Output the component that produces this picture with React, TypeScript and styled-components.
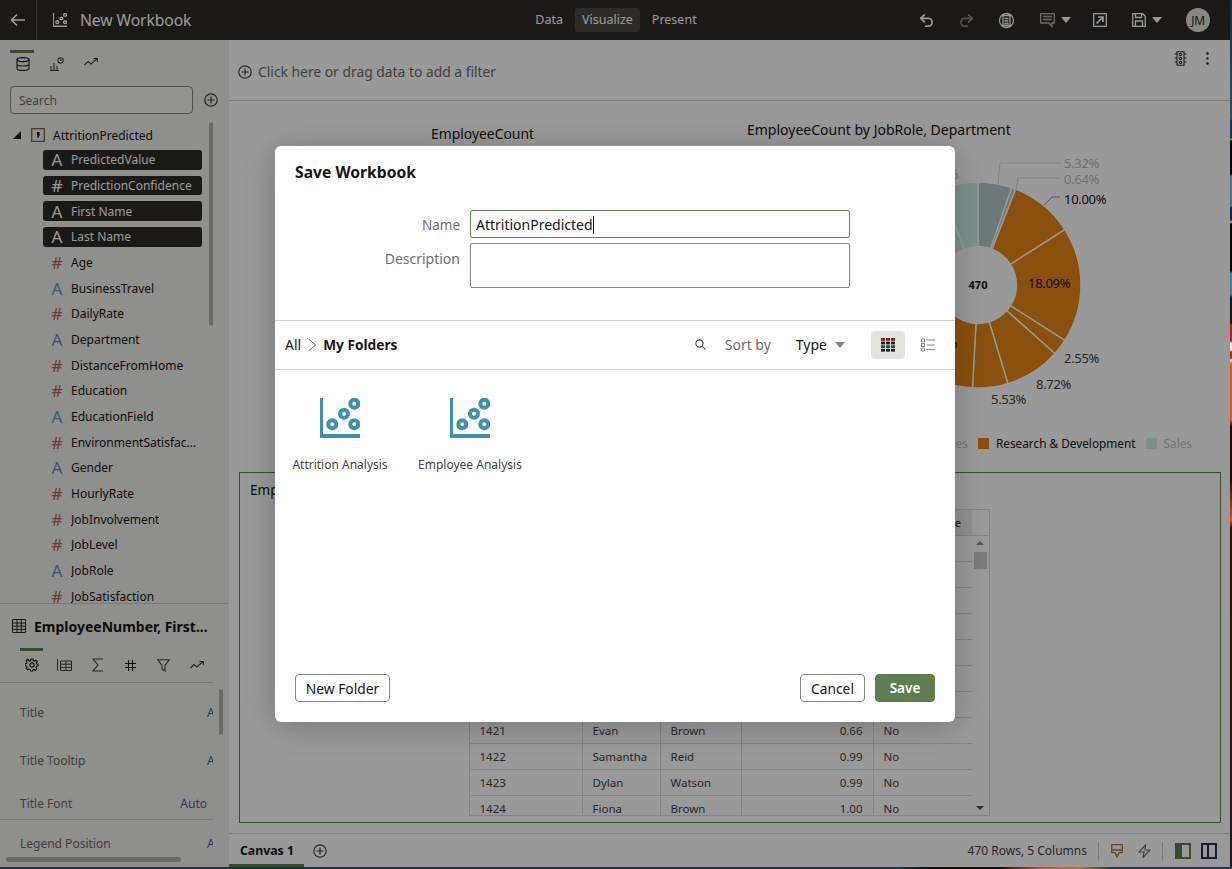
import React from "react";
import styled, { createGlobalStyle } from "styled-components";
import { Undo2, Redo2 } from "lucide-react";

const Global = createGlobalStyle`
  html, body { margin: 0; padding: 0; background: #0a2a3a; }
  body { font-family: "Noto Sans", "Liberation Sans", sans-serif; color: #161513; }
  * { box-sizing: border-box; }
`;

const Root = styled.div`
  width: 1232px; height: 869px; overflow: hidden;
  display: grid; grid-template-columns: 1230px 2px; grid-template-rows: 867px 2px;
`;
const RightStrip = styled.div`
  background: linear-gradient(180deg, #1c2c3a 0, #3a4a50 119px, #0a3a5a 120px, #0a3a5a 138px, #e0a040 139px, #050510 141px, #050510 174px, #5a6a78 176px, #5a6a78 206px, #102050 208px, #102050 220px, #e0c040 222px, #050508 224px, #050508 271px, #4a7a88 273px, #4a7a88 295px, #181820 297px, #181820 323px, #c01818 325px, #c01818 341px, #f0f0f0 343px, #f0f0f0 350px, #c02010 352px, #c02010 358px, #f0f0f0 360px, #e8501a 364px, #e8501a 420px, #200a08 426px, #200a08 480px, #e04a10 520px, #301010 528px, #201820 869px);
`;
const BottomStrip = styled.div`
  grid-column: 1 / span 2;
  background: linear-gradient(90deg, #0a3a4a 0, #0a3a4a 900px, #200a10 930px, #200a10 1000px, #e8401a 1040px, #e8601a 1080px, #104050 1110px, #104050 1232px);
`;
const Win = styled.div`
  position: relative; overflow: hidden; background: #fff;
  display: flex; flex-direction: column;
`;
const Scrim = styled.div`
  position: absolute; inset: 0; background: rgba(0, 0, 0, 0.4);
  padding: 146px 0 0 275px;
`;

/* ---------- header ---------- */
const Header = styled.header`
  height: 40px; flex: none; background: #2c2a28; color: #fff;
  display: grid; grid-template-columns: 1fr auto 1fr; align-items: center;
`;
const HeaderLeft = styled.div`display: flex; align-items: center; height: 100%;`;
const BackBtn = styled.div`
  width: 37px; height: 100%; display: flex; align-items: center; justify-content: center;
  border-right: 1px solid #55524e;
`;
const WorkbookIcon = styled.div`margin-left: 16px; width: 14px; height: 14px; display: flex;`;
const WorkbookTitle = styled.div`margin-left: 13px; font-size: 15.7px; letter-spacing: -0.1px;`;
const Modes = styled.nav`display: flex; align-items: center; gap: 12px; margin-left: 2px;`;
const Mode = styled.div<{ $active?: boolean }>`
  font-size: 12.5px; height: 24px; line-height: 24px; padding: 0 ${(p) => (p.$active ? "7px" : "0")};
  border-radius: 3px; background: ${(p) => (p.$active ? "#4a4845" : "transparent")};
`;
const HeaderRight = styled.div`
  display: flex; align-items: center; justify-content: flex-end; height: 100%; padding-right: 20px;
`;
const HIcon = styled.div<{ $w?: number }>`
  width: ${(p) => p.$w ?? 40}px; height: 100%; display: flex; align-items: center; justify-content: center; gap: 6px;
`;
const Caret = styled.span<{ $c?: string }>`
  width: 0; height: 0; border-left: 5px solid transparent; border-right: 5px solid transparent;
  border-top: 6px solid ${(p) => p.$c ?? "#fff"};
`;
const Avatar = styled.div`
  width: 24px; height: 24px; border-radius: 50%; background: #e4e1dc; color: #2c2a28; margin-left: 8px;
  font-size: 12px; display: flex; align-items: center; justify-content: center; letter-spacing: -0.3px;
`;

/* ---------- body ---------- */
const Body = styled.div`flex: 1; display: flex; min-height: 0;`;
const Side = styled.aside`
  width: 229px; flex: none; background: #efeeec; display: flex; flex-direction: column; position: relative;
`;
const SideTabs = styled.div`display: flex; height: 46px; padding-left: 6px;`;
const SideTab = styled.div<{ $active?: boolean }>`
  width: 34px; padding-top: 10px; display: flex; justify-content: center; position: relative; height: 46px;
  &::before {
    content: ""; display: ${(p) => (p.$active ? "block" : "none")};
    position: absolute; top: 10px; left: 4px; width: 24px; height: 3px; background: #5f7d4f;
  }
  & > svg { margin-top: 7px; }
`;
const SearchRow = styled.div`display: flex; align-items: center; padding-left: 10px; gap: 11px; flex: none;`;
const SearchBox = styled.div`
  width: 183px; height: 28px; border: 1px solid #8c8681; border-radius: 4px; background: #f6f5f3;
  font-size: 12px; color: #6f6b67; padding-left: 8px; line-height: 28px;
`;
const Tree = styled.div`
  height: 481px; margin-top: 8px; flex: none; overflow: hidden; position: relative;
`;
const TreeRoot = styled.div`
  display: flex; align-items: center; height: 25px; padding: 1px 0 0 13px; font-size: 12px; gap: 8px;
`;
const Triangle = styled.span`
  width: 0; height: 0; border-bottom: 8px solid #161513; border-left: 8px solid transparent; margin-right: 2px;
`;
const FieldRow = styled.div<{ $selected?: boolean }>`
  height: 25.68px; margin-left: 43px; width: 159px; display: flex; align-items: center;
  position: relative; font-size: 12px; white-space: nowrap;
  padding: 0 3px 0 28px;
  color: ${(p) => (p.$selected ? "#fff" : "#161513")};
  &::before {
    content: ""; position: absolute; left: 0; right: 0; top: 3px; bottom: 3px; border-radius: 3px;
    background: ${(p) => (p.$selected ? "#2c2a28" : "transparent")};
  }
`;
const FieldGlyph = styled.span<{ $kind: "text" | "num"; $selected?: boolean }>`
  position: absolute; left: 7px; width: 14px; text-align: center; font-size: 17px; line-height: 1;
  color: ${(p) => (p.$selected ? "#fff" : p.$kind === "num" ? "#c0644c" : "#5a9ab5")};
`;
const FieldText = styled.span`position: relative; overflow: hidden; text-overflow: ellipsis;`;
const VScroll = styled.div<{ $top: number; $h: number; $x: number }>`
  position: absolute; left: ${(p) => p.$x}px; top: ${(p) => p.$top}px; height: ${(p) => p.$h}px;
  width: 4px; border-radius: 2px; background: #b5b1ac;
`;
const Props = styled.section`
  flex: 1; border-top: 1px solid #c9c6c2; position: relative; overflow: hidden;
`;
const PropsTitle = styled.div`
  height: 44px; display: flex; align-items: center; padding-left: 12px; gap: 8px;
  font-weight: 700; font-size: 14px; white-space: nowrap;
`;
const PropTabs = styled.div`
  display: flex; width: 213px; height: 35px; border-bottom: 1px solid #c9c6c2; padding-left: 15px;
`;
const PropTab = styled.div<{ $active?: boolean }>`
  width: 33px; display: flex; align-items: center; justify-content: center; position: relative;
  &::before {
    content: ""; display: ${(p) => (p.$active ? "block" : "none")};
    position: absolute; top: 0; left: 5px; width: 23px; height: 3px; background: #5f7d4f;
  }
`;
const PropRow = styled.div<{ $h: number; $line?: boolean; $pt?: number }>`
  width: 213px; height: ${(p) => p.$h}px; display: flex; align-items: center; overflow: hidden; padding-left: 20px;
  padding-top: ${(p) => p.$pt ?? 0}px;
  font-size: 12px; color: #6f6b67;
  border-bottom: ${(p) => (p.$line ? "1px solid #c9c6c2" : "none")};
`;
const PropLabel = styled.span`flex: 1;`;
const PropVal = styled.span<{ $clip?: boolean }>`
  color: #2a6f96; margin-right: ${(p) => (p.$clip ? "-21px" : "6px")}; width: ${(p) => (p.$clip ? "27px" : "auto")};
`;
const HBar = styled.div`
  position: absolute; left: 6px; bottom: 5px; width: 175px; height: 5px; border-radius: 3px; background: #b5b1ac;
`;

/* ---------- canvas ---------- */
const Main = styled.main`flex: 1; display: flex; flex-direction: column; min-width: 0; background: #fff;`;
const FilterBar = styled.div`
  height: 61px; flex: none; border-bottom: 1px solid #d6d3cf; background: #fff;
  display: flex; align-items: center; padding: 0 21px 0 9px; position: relative;
`;
const FilterText = styled.div`
  display: flex; align-items: center; gap: 6px; font-size: 13.85px; color: #6f6b67; margin-top: 3px; flex: 1;
`;
const FilterTools = styled.div`display: flex; align-items: center; gap: 18px; margin-top: -24px;`;
const Charts = styled.div`height: 371px; flex: none; display: flex;`;
const LeftChart = styled.div`width: 505px; text-align: center; font-size: 13.9px; padding: 23px 0 0 2px;`;
const RightChart = styled.div`flex: 1; display: flex; flex-direction: column; font-size: 13px; padding-top: 20px;`;
const ChartTitle = styled.div`margin-left: 13px; height: 21px; line-height: 18px; font-size: 14px; white-space: nowrap;`;
const DonutSvg = styled.svg`display: block; flex: none; font-family: "Noto Sans", sans-serif;`;
const Legend = styled.div`
  display: flex; justify-content: flex-end; align-items: center; padding-right: 38px; gap: 10px; font-size: 11.8px;
  height: 18px; margin-top: 2px;
`;
const LegendItem = styled.div<{ $dim?: boolean }>`
  display: flex; align-items: center; gap: 7px; white-space: nowrap; color: ${(p) => (p.$dim ? "#c4c4c4" : "#161513")};
`;
const Swatch = styled.span<{ $c: string }>`width: 11px; height: 11px; background: ${(p) => p.$c};`;
const TablePanel = styled.section`
  height: 351px; margin: 0 9px 0 10px; border: 1px solid #5f7d4f; flex: none; position: relative; overflow: hidden;
`;
const PanelTitle = styled.div`font-size: 13.5px; height: 36px; padding: 8px 0 0 10px; white-space: nowrap;`;
const TableWrap = styled.div`display: flex; justify-content: center; height: 307px; padding-right: 2px;`;
const TableClip = styled.div`width: 503px; height: 307px; overflow: hidden; border-bottom: 1px solid #dcdcdc;`;
const Tbl = styled.table`
  border-collapse: collapse; table-layout: fixed; width: 503px; font-size: 11.5px; color: #44413e;
  th, td { border: 1px solid #dcdcdc; padding: 0 10px; height: 26px; white-space: nowrap; overflow: hidden; font-weight: 400; text-align: left; }
  th { background: #f2f2f2; color: #161513; font-size: 11px; }
`;
const Col = styled.col<{ $w: number }>`width: ${(p) => p.$w}px;`;
const Num = styled.td` && { text-align: right; } `;
const Scroll = styled.div`
  width: 18px; border: 1px solid #dcdcdc; border-left: none; display: flex; flex-direction: column; align-items: center; position: relative;
`;
const ScrollHead = styled.div`height: 26px; width: 100%; border-bottom: 1px solid #dcdcdc; flex: none;`;
const ArrowUp = styled.span`
  margin-top: 5px; width: 0; height: 0; border-left: 4px solid transparent; border-right: 4px solid transparent; border-bottom: 4px solid #8f8f8f;
`;
const Thumb = styled.span`margin-top: 7px; width: 13px; height: 17px; background: #cdcdcd;`;
const ArrowDown = styled.span`
  margin-top: auto; margin-bottom: 5px; width: 0; height: 0; border-left: 4px solid transparent; border-right: 4px solid transparent; border-top: 4px solid #505050;
`;
const BottomBar = styled.footer`
  margin-top: auto; height: 34px; flex: none; border-top: 1px solid #d6d3cf; display: flex; align-items: center;
`;
const CanvasTab = styled.div`
  width: 75px; height: 33px; border-bottom: 3px solid #5f7d4f; text-align: center; font-size: 12.3px; font-weight: 700;
  line-height: 33px; padding-left: 1px;
`;
const AddCanvas = styled.div`margin-left: 9px; display: flex;`;
const Status = styled.div`margin-left: auto; font-size: 12px; color: #44413e;`;
const BarDivider = styled.span<{ $ml: number }>`width: 1px; height: 18px; background: #cfccc8; margin-left: ${(p) => p.$ml}px;`;
const BarIcons = styled.div`display: flex; align-items: center; gap: 15px; margin-left: 12px;`;
const Panes = styled.div`display: flex; align-items: center; gap: 10px; margin: 0 13px 0 12px;`;
const Pane = styled.span<{ $side: "left" | "mid" }>`
  width: 16px; height: 16px; border: 2px solid ${(p) => (p.$side === "left" ? "#5f7d4f" : "#2c2a50")}; position: relative;
  background: ${(p) =>
    p.$side === "left"
      ? "linear-gradient(90deg,#5f7d4f 0 5px,transparent 5px)"
      : "linear-gradient(90deg,transparent 4px,#2c2a50 4px 6px,transparent 6px)"};
`;

/* ---------- dialog ---------- */
const Dialog = styled.div`
  width: 680px; height: 576px; background: #fff; border-radius: 6px; display: flex; flex-direction: column;
  box-shadow: 0 4px 32px rgba(0, 0, 0, 0.22);
`;
const DialogTitle = styled.h2`
  margin: 0; padding: 16px 20px 0; height: 64px; font-size: 15.7px; font-weight: 700; line-height: 20px; flex: none;
`;
const Form = styled.div`
  display: grid; grid-template-columns: 185px 380px; grid-auto-rows: min-content; align-content: start;
  column-gap: 10px; row-gap: 5px; height: 110px; flex: none; font-size: 14px;
`;
const FieldLabel = styled.label<{ $top?: boolean }>`
  text-align: right; color: #6f6b67; font-size: ${(p) => (p.$top ? "14px" : "13.5px")}; line-height: ${(p) => (p.$top ? "31px" : "30px")}; align-self: start;
  height: 28px;
`;
const NameInput = styled.div`
  height: 28px; border: 1px solid #5f7d4f; border-radius: 2px; padding: 1px 0 0 5px; line-height: 26px; display: flex; align-items: center;
`;
const Cursor = styled.span`width: 1px; height: 18px; background: #161513;`;
const DescInput = styled.div`height: 45px; border: 1px solid #8c8681; border-radius: 2px;`;
const Nav = styled.div`
  height: 50px; flex: none; border-top: 1px solid #d6d3cf; border-bottom: 1px solid #d6d3cf;
  display: flex; align-items: center; padding: 0 10px 1px 10px; font-size: 14px;
`;
const Crumb = styled.span<{ $b?: boolean }>`font-weight: ${(p) => (p.$b ? 700 : 400)}; font-size: ${(p) => (p.$b ? "13.7px" : "14px")};`;
const ChevronWrap = styled.span`display: flex; margin: 0 6px;`;
const NavTools = styled.div`margin-left: auto; display: flex; align-items: center;`;
const SortLabel = styled.span`color: #6f6b67; margin-left: 19px;`;
const TypeSel = styled.span`margin-left: 25px; display: flex; align-items: center; gap: 8px;`;
const ViewBtn = styled.div<{ $on?: boolean; $ml: number }>`
  width: 34px; height: 28px; border-radius: 4px; background: ${(p) => (p.$on ? "#e4e3e0" : "transparent")};
  display: flex; align-items: center; justify-content: center; margin-left: ${(p) => p.$ml}px;
`;
const Gallery = styled.div`flex: 1; display: flex; align-items: flex-start; padding-top: 28px;`;
const Item = styled.div`width: 130px; display: flex; flex-direction: column; align-items: center; font-size: 12px; color: #44413e;`;
const ItemLabel = styled.div`margin-top: 18px; line-height: 17px;`;
const DialogFoot = styled.div`
  flex: none; height: 48px; padding: 0 20px; display: flex; align-items: flex-start; gap: 10px;
`;
const Btn = styled.button<{ $primary?: boolean; $w: number }>`
  height: 28px; width: ${(p) => p.$w}px; border-radius: 4px; font-family: inherit; font-size: ${(p) => (p.$primary ? "13.5px" : "13.8px")}; padding: 0;
  border: 1px solid ${(p) => (p.$primary ? "#5f7d4f" : "#8c8681")};
  background: ${(p) => (p.$primary ? "#5f7d4f" : "#fff")};
  color: ${(p) => (p.$primary ? "#fff" : "#161513")};
  font-weight: ${(p) => (p.$primary ? 600 : 400)};
`;
const Spacer = styled.span`flex: 1;`;

/* ---------- icons ---------- */
const Scatter = ({ size, color }: { size: number; color: string }) => (
  <svg width={size} height={size} viewBox="0 0 40 40">
    <path d="M0 0h3v36h37v4H0z" fill={color} />
    {[[12.3, 26.3], [24, 15.7], [34.3, 5.7], [34.3, 26.3]].map(([x, y]) => (
      <circle key={`${x}-${y}`} cx={x} cy={y} r={4} fill="none" stroke={color} strokeWidth={4} />
    ))}
  </svg>
);
const PlusCircle = ({ c = "#44413e" }: { c?: string }) => (
  <svg width="14" height="14" viewBox="0 0 14 14" fill="none" stroke={c} strokeWidth="1.2">
    <circle cx="7" cy="7" r="6.2" /><path d="M7 3.5v7M3.5 7h7" />
  </svg>
);
const Back = () => (
  <svg width="16" height="14" viewBox="0 0 16 14" fill="none" stroke="#fff" strokeWidth="1.6">
    <path d="M15 7H2M7 1.5 1.5 7 7 12.5" />
  </svg>
);
const Db = () => (
  <svg width="14" height="14" viewBox="0 0 14 14" fill="none" stroke="#161513" strokeWidth="1.2">
    <ellipse cx="7" cy="2.6" rx="6" ry="2" />
    <path d="M1 2.6v8.8c0 1.1 2.7 2 6 2s6-.9 6-2V2.6M1 7c0 1.1 2.7 2 6 2s6-.9 6-2" stroke="#3a3020" />
  </svg>
);
const Viz = () => (
  <svg width="14" height="14" viewBox="0 0 14 14" fill="none" stroke="#44413e" strokeWidth="1.1">
    <path d="M1 13.5V9M4 13.5V6M7 13.5V9M0 13.5h9" /><circle cx="10.5" cy="3.5" r="2.6" /><path d="M10.5 2v1.5h1.3" />
  </svg>
);
const Trend = () => (
  <svg width="14" height="10" viewBox="0 0 14 10" fill="none" stroke="#44413e" strokeWidth="1.1">
    <path d="M.5 8 4 4.5 7 7l6-5.5M9.5 1.5h3.8v3.5" />
  </svg>
);
const TableIcon = ({ c = "#2c2a28" }: { c?: string }) => (
  <svg width="14" height="14" viewBox="0 0 14 14" fill="none" stroke={c} strokeWidth="1">
    <path d="M.5.500h13v13H.5zM.5 4h13M.5 7.200h13M.5 10.400h13M5 .5v13M9.300.5v13" />
  </svg>
);
const Gear = () => (
  <svg width="14" height="14" viewBox="0 0 24 24" fill="none" stroke="#161513" strokeWidth="2.2">
    <circle cx="12" cy="12" r="3.5" />
    <path d="M10 2h4l.6 3 2.5 1 2.6-1.6 2.8 2.8L20.900 9.800l1 2.200 2 .8v3l-3 .7-1 2.500 1.600 2.600-2.800 2.800-2.600-1.600-2.500 1-.6 2.200h-4l-.6-3-2.500-1-2.600 1.600-2.800-2.800 1.600-2.600-1-2.500-3-.7v-4l3-.6 1-2.500-1.600-2.600 2.800-2.800L7 6l2.400-1z" transform="scale(.86) translate(2 0)" />
  </svg>
);
const RowsIcon = () => (
  <svg width="15" height="12" viewBox="0 0 15 12" fill="none" stroke="#44413e" strokeWidth="1">
    <path d="M.5 0v12M3.500 2h11v9.500h-11zM3.500 5.200h11M3.500 8.400h11M9 2v9.500" />
  </svg>
);
const Sigma = () => (
  <svg width="12" height="14" viewBox="0 0 12 14" fill="none" stroke="#44413e" strokeWidth="1.1"><path d="M11 1H1l5 6-5 6h10" /></svg>
);
const Hash = () => (
  <svg width="13" height="13" viewBox="0 0 13 13" fill="none" stroke="#161513" strokeWidth="1.1"><path d="M4.500 1v11M8.500 1v11M1 4.500h11M1 8.500h11" /></svg>
);
const Funnel = () => (
  <svg width="13" height="13" viewBox="0 0 13 13" fill="none" stroke="#44413e" strokeWidth="1.1"><path d="M.8.800h11.400L8 6.500v5.500l-3-2V6.500z" /></svg>
);
const Magnify = () => (
  <svg width="11" height="11" viewBox="0 0 11 11" fill="none" stroke="#44413e" strokeWidth="1.1"><circle cx="4.500" cy="4.500" r="3.600" /><path d="m7.300 7.300 3 3" /></svg>
);
const Chevron = () => (
  <svg width="10" height="14" viewBox="0 0 10 14" fill="none" stroke="#6f6b67" strokeWidth="1"><path d="m1.500 1 7 6-7 6" /></svg>
);
const GridIcon = () => {
  const cols = ["#7a1f1f", "#1d1d1d", "#1f5a2c", "#141f5a"];
  return (
    <svg width="14" height="14" viewBox="0 0 14 14">
      {cols.map((c, r) =>
        [0, 1, 2].map((k) => <rect key={`${r}${k}`} x={k * 5} y={r * 3.6} width="4" height="2.800" fill={c} />)
      )}
    </svg>
  );
};
const ListIcon = () => (
  <svg width="14" height="14" viewBox="0 0 14 14" fill="none" stroke="#8c8681" strokeWidth="1">
    <path d="M.5 1h3v3h-3zM.5 5.500h3v3h-3zM.5 10h3v3h-3zM5.500 2h8.500M5.500 7h8.500M5.500 11.500h8.500" />
  </svg>
);
const Comment = ({ c }: { c: string }) => (
  <svg width="15" height="15" viewBox="0 0 15 15" fill="none" stroke={c} strokeWidth="1.300"><path d="M.7.700h13.600v9.300h-2.500v3.500l-3-3.500H.7zM3 3.500h9M3 6.500h9" /></svg>
);
const Narr = () => (
  <svg width="17" height="17" viewBox="0 0 17 17" fill="none" stroke="#fff" strokeWidth="1.300">
    <circle cx="8.500" cy="8.500" r="7" /><path d="M5 3.500h7v10H5zM6.500 6.500h4M6.500 9h4M6.500 11.500h4" />
  </svg>
);
const Present = () => (
  <svg width="14" height="14" viewBox="0 0 14 14" fill="none" stroke="#fff" strokeWidth="1.300">
    <path d="M.7.700h12.600v12.600H.7z" /><path d="M3.500 10.500 9.500 4.500M5 4h5v5" strokeWidth="1.700" />
  </svg>
);
const Floppy = () => (
  <svg width="14" height="14" viewBox="0 0 14 14" fill="none" stroke="#fff" strokeWidth="1.300">
    <path d="M.7.700h10l2.600 2.600v10H.7zM3.500 13V8h7v5M3.500 1v3.500h6V1" />
  </svg>
);
const Signal = () => (
  <svg width="15" height="15" viewBox="0 0 15 15" fill="none" stroke="#3a3020" strokeWidth="1.100">
    <path d="M4 .7h7v13.600H4zM4 3H1.500M4 7H1.500M4 11H1.500M11 3h2.500M11 7h2.500M11 11h2.500" /><circle cx="7.500" cy="3.500" r="1.200" /><circle cx="7.500" cy="7.500" r="1.200" /><circle cx="7.500" cy="11.500" r="1.200" />
  </svg>
);
const Dots = () => (
  <svg width="3" height="13" viewBox="0 0 3 13" fill="#2c2a28"><circle cx="1.500" cy="1.500" r="1.200" /><circle cx="1.500" cy="6.500" r="1.200" /><circle cx="1.500" cy="11.500" r="1.200" /></svg>
);
const Pin = () => (
  <svg width="12" height="14" viewBox="0 0 12 14" fill="none" stroke="#a08030" strokeWidth="1.300"><path d="M.7.700h10.600v8H8L6 13 4 8.700H.7zM.7 6h10.600" /></svg>
);
const Bolt = () => (
  <svg width="13" height="14" viewBox="0 0 13 14" fill="none" stroke="#5f7d4f" strokeWidth="1.200"><path d="M7.500 .8 1 8h5l-1 5.500L12 6H7z" /></svg>
);
const DatasetIcon = () => (
  <svg width="14" height="14" viewBox="0 0 14 14" fill="none">
    <path d="M.7.700h12.600v12.600H.7z" stroke="#8a6030" strokeWidth="1.300" />
    <path d="M6 4h2.500v3.500L7 10H6l.8-2.500H6z" fill="#161513" />
  </svg>
);

/* ---------- data ---------- */
const fields: [string, "text" | "num", boolean][] = [
  ["PredictedValue", "text", true],
  ["PredictionConfidence", "num", true],
  ["First Name", "text", true],
  ["Last Name", "text", true],
  ["Age", "num", false],
  ["BusinessTravel", "text", false],
  ["DailyRate", "num", false],
  ["Department", "text", false],
  ["DistanceFromHome", "num", false],
  ["Education", "num", false],
  ["EducationField", "text", false],
  ["EnvironmentSatisfaction", "num", false],
  ["Gender", "text", false],
  ["HourlyRate", "num", false],
  ["JobInvolvement", "num", false],
  ["JobLevel", "num", false],
  ["JobRole", "text", false],
  ["JobSatisfaction", "num", false],
];
const rows: [string, string, string, string, string][] = [
  ["1414", "Ryan", "Clark", "0.98", "No"],
  ["1415", "Sonia", "Mills", "0.94", "No"],
  ["1416", "Adam", "Lewis", "0.99", "No"],
  ["1417", "Wendy", "Hill", "0.89", "No"],
  ["1418", "Peter", "Gray", "0.96", "No"],
  ["1419", "Amy", "Young", "0.93", "No"],
  ["1420", "Paul", "Scott", "0.97", "No"],
  ["1421", "Evan", "Brown", "0.66", "No"],
  ["1422", "Samantha", "Reid", "0.99", "No"],
  ["1423", "Dylan", "Watson", "0.99", "No"],
  ["1424", "Fiona", "Brown", "1.00", "No"],
];

const CX = 244, CY = 143, R = 103, r0 = 38.5;
const pt = (pct: number, rad: number) => {
  const a = (pct / 100) * 2 * Math.PI;
  return `${(CX + rad * Math.sin(a)).toFixed(2)} ${(CY - rad * Math.cos(a)).toFixed(2)}`;
};
const slice = (from: number, to: number) => {
  const large = to - from > 50 ? 1 : 0;
  return `M${pt(from, r0)}L${pt(from, R)}A${R} ${R} 0 ${large} 1 ${pt(to, R)}L${pt(to, r0)}A${r0} ${r0} 0 ${large} 0 ${pt(from, r0)}Z`;
};
const GREY = "#b4cbca", ORANGE = "#e68517", TEAL = "#cdf2e9";
const slices: [number, number, string][] = [
  [0, 5.32, GREY], [5.32, 5.96, GREY], [5.96, 15.96, ORANGE], [15.96, 34.05, ORANGE], [34.05, 36.6, ORANGE],
  [36.6, 45.32, ORANGE], [45.32, 50.85, ORANGE], [50.85, 72, ORANGE], [72, 84, ORANGE], [84, 94.17, TEAL], [94.17, 100, TEAL],
];

const Donut = () => (
  <DonutSvg width="496" height="290" viewBox="0 0 496 290">
    {slices.map(([a, b, c]) => (
      <path key={a} d={slice(a, b)} fill={c} stroke="#fff" strokeWidth="1.400" />
    ))}
    <path d="M264 42 266 21H328" fill="none" stroke="#d8d8d8" />
    <path d="M282 48 284 36H326" fill="none" stroke="#d8d8d8" />
    <path d="M310 63 318 55H326" fill="none" stroke="#9a9a9a" />
    <text x="244" y="147" textAnchor="middle" fontSize="11" fontWeight="700" fill="#161513">470</text>
    <g fontSize="13" letterSpacing="-0.3" fill="#44413e">
      <text x="330" y="26" fill="#bcbcbc">5.32%</text>
      <text x="330" y="42" fill="#bcbcbc">0.64%</text>
      <text x="330" y="62" fill="#161513">10.00%</text>
      <text x="294" y="146" fill="#161513">18.09%</text>
      <text x="330" y="221">2.55%</text>
      <text x="302" y="247">8.72%</text>
      <text x="257" y="262">5.53%</text>
      <text x="224" y="37" textAnchor="end" fill="#bcbcbc">6.38%</text>
      <text x="223" y="206" textAnchor="end" fill="#161513">11.28%</text>
    </g>
  </DonutSvg>
);

export default function App() {
  return (
    <Root>
      <Global />
      <Win>
        <Header>
          <HeaderLeft>
            <BackBtn><Back /></BackBtn>
            <WorkbookIcon><Scatter size={14} color="#fff" /></WorkbookIcon>
            <WorkbookTitle>New Workbook</WorkbookTitle>
          </HeaderLeft>
          <Modes>
            <Mode>Data</Mode>
            <Mode $active>Visualize</Mode>
            <Mode>Present</Mode>
          </Modes>
          <HeaderRight>
            <HIcon><Undo2 size={17} color="#fff" strokeWidth={2.4} /></HIcon>
            <HIcon><Redo2 size={17} color="#8a8886" strokeWidth={2.4} /></HIcon>
            <HIcon><Narr /></HIcon>
            <HIcon $w={58}><Comment c="#b5b3b0" /><Caret /></HIcon>
            <HIcon $w={32}><Present /></HIcon>
            <HIcon $w={62}><Floppy /><Caret /></HIcon>
            <Avatar>JM</Avatar>
          </HeaderRight>
        </Header>
        <Body>
          <Side>
            <SideTabs>
              <SideTab $active><Db /></SideTab>
              <SideTab><Viz /></SideTab>
              <SideTab><Trend /></SideTab>
            </SideTabs>
            <SearchRow>
              <SearchBox>Search</SearchBox>
              <PlusCircle />
            </SearchRow>
            <Tree>
              <TreeRoot>
                <Triangle />
                <DatasetIcon />
                <span>AttritionPredicted</span>
              </TreeRoot>
              {fields.map(([name, kind, sel]) => (
                <FieldRow key={name} $selected={sel}>
                  <FieldGlyph $kind={kind} $selected={sel}>{kind === "num" ? "#" : "A"}</FieldGlyph>
                  <FieldText>{name}</FieldText>
                </FieldRow>
              ))}
              <VScroll $x={209} $top={0} $h={204} />
            </Tree>
            <Props>
              <PropsTitle><TableIcon /><span>EmployeeNumber, First...</span></PropsTitle>
              <PropTabs>
                <PropTab $active><Gear /></PropTab>
                <PropTab><RowsIcon /></PropTab>
                <PropTab><Sigma /></PropTab>
                <PropTab><Hash /></PropTab>
                <PropTab><Funnel /></PropTab>
                <PropTab><Trend /></PropTab>
              </PropTabs>
              <PropRow $h={59}><PropLabel>Title</PropLabel><PropVal $clip>Auto</PropVal></PropRow>
              <PropRow $h={37}><PropLabel>Title Tooltip</PropLabel><PropVal $clip>Auto</PropVal></PropRow>
              <PropRow $h={41} $line $pt={8}><PropLabel>Title Font</PropLabel><PropVal>Auto</PropVal></PropRow>
              <PropRow $h={46}><PropLabel>Legend Position</PropLabel><PropVal $clip>Auto</PropVal></PropRow>
              <VScroll $x={219} $top={85} $h={46} />
              <HBar />
            </Props>
          </Side>
          <Main>
            <FilterBar>
              <FilterText><PlusCircle /><span>Click here or drag data to add a filter</span></FilterText>
              <FilterTools><Signal /><Dots /></FilterTools>
            </FilterBar>
            <Charts>
              <LeftChart>EmployeeCount</LeftChart>
              <RightChart>
                <ChartTitle>EmployeeCount by JobRole, Department</ChartTitle>
                <Donut />
                <Legend>
                  <LegendItem $dim><Swatch $c="#b4cbca" />Human Resources</LegendItem>
                  <LegendItem><Swatch $c={ORANGE} />Research &amp; Development</LegendItem>
                  <LegendItem $dim><Swatch $c={TEAL} />Sales</LegendItem>
                </Legend>
              </RightChart>
            </Charts>
            <TablePanel>
              <PanelTitle>EmployeeNumber, First Name, Last Name, PredictionConfidence, PredictedValue</PanelTitle>
              <TableWrap>
                <TableClip>
                  <Tbl>
                    <colgroup>
                      <Col $w={113} /><Col $w={78} /><Col $w={81} /><Col $w={132} /><Col $w={99} />
                    </colgroup>
                    <thead>
                      <tr><th>EmployeeNumber</th><th>First Name</th><th>Last Name</th><th>Confidence</th><th>PredictedValue</th></tr>
                    </thead>
                    <tbody>
                      {rows.map((row) => (
                        <tr key={row[0]}>
                          <td>{row[0]}</td><td>{row[1]}</td><td>{row[2]}</td><Num>{row[3]}</Num><td>{row[4]}</td>
                        </tr>
                      ))}
                    </tbody>
                  </Tbl>
                </TableClip>
                <Scroll>
                  <ScrollHead />
                  <ArrowUp />
                  <Thumb />
                  <ArrowDown />
                </Scroll>
              </TableWrap>
            </TablePanel>
            <BottomBar>
              <CanvasTab>Canvas 1</CanvasTab>
              <AddCanvas><PlusCircle /></AddCanvas>
              <Status>470 Rows, 5 Columns</Status>
              <BarDivider $ml={11} />
              <BarIcons><Pin /><Bolt /></BarIcons>
              <BarDivider $ml={11} />
              <Panes><Pane $side="left" /><Pane $side="mid" /></Panes>
            </BottomBar>
          </Main>
        </Body>
        <Scrim>
          <Dialog>
            <DialogTitle>Save Workbook</DialogTitle>
            <Form>
              <FieldLabel>Name</FieldLabel>
              <NameInput>AttritionPredicted<Cursor /></NameInput>
              <FieldLabel $top>Description</FieldLabel>
              <DescInput />
            </Form>
            <Nav>
              <Crumb>All</Crumb>
              <ChevronWrap><Chevron /></ChevronWrap>
              <Crumb $b>My Folders</Crumb>
              <NavTools>
                <Magnify />
                <SortLabel>Sort by</SortLabel>
                <TypeSel>Type <Caret $c="#8c8681" /></TypeSel>
                <ViewBtn $on $ml={26}><GridIcon /></ViewBtn>
                <ViewBtn $ml={6}><ListIcon /></ViewBtn>
              </NavTools>
            </Nav>
            <Gallery>
              <Item><Scatter size={40} color="#3f8fae" /><ItemLabel>Attrition Analysis</ItemLabel></Item>
              <Item><Scatter size={40} color="#3f8fae" /><ItemLabel>Employee Analysis</ItemLabel></Item>
            </Gallery>
            <DialogFoot>
              <Btn $w={95}>New Folder</Btn>
              <Spacer />
              <Btn $w={65}>Cancel</Btn>
              <Btn $w={60} $primary>Save</Btn>
            </DialogFoot>
          </Dialog>
        </Scrim>
      </Win>
      <RightStrip />
      <BottomStrip />
    </Root>
  );
}
